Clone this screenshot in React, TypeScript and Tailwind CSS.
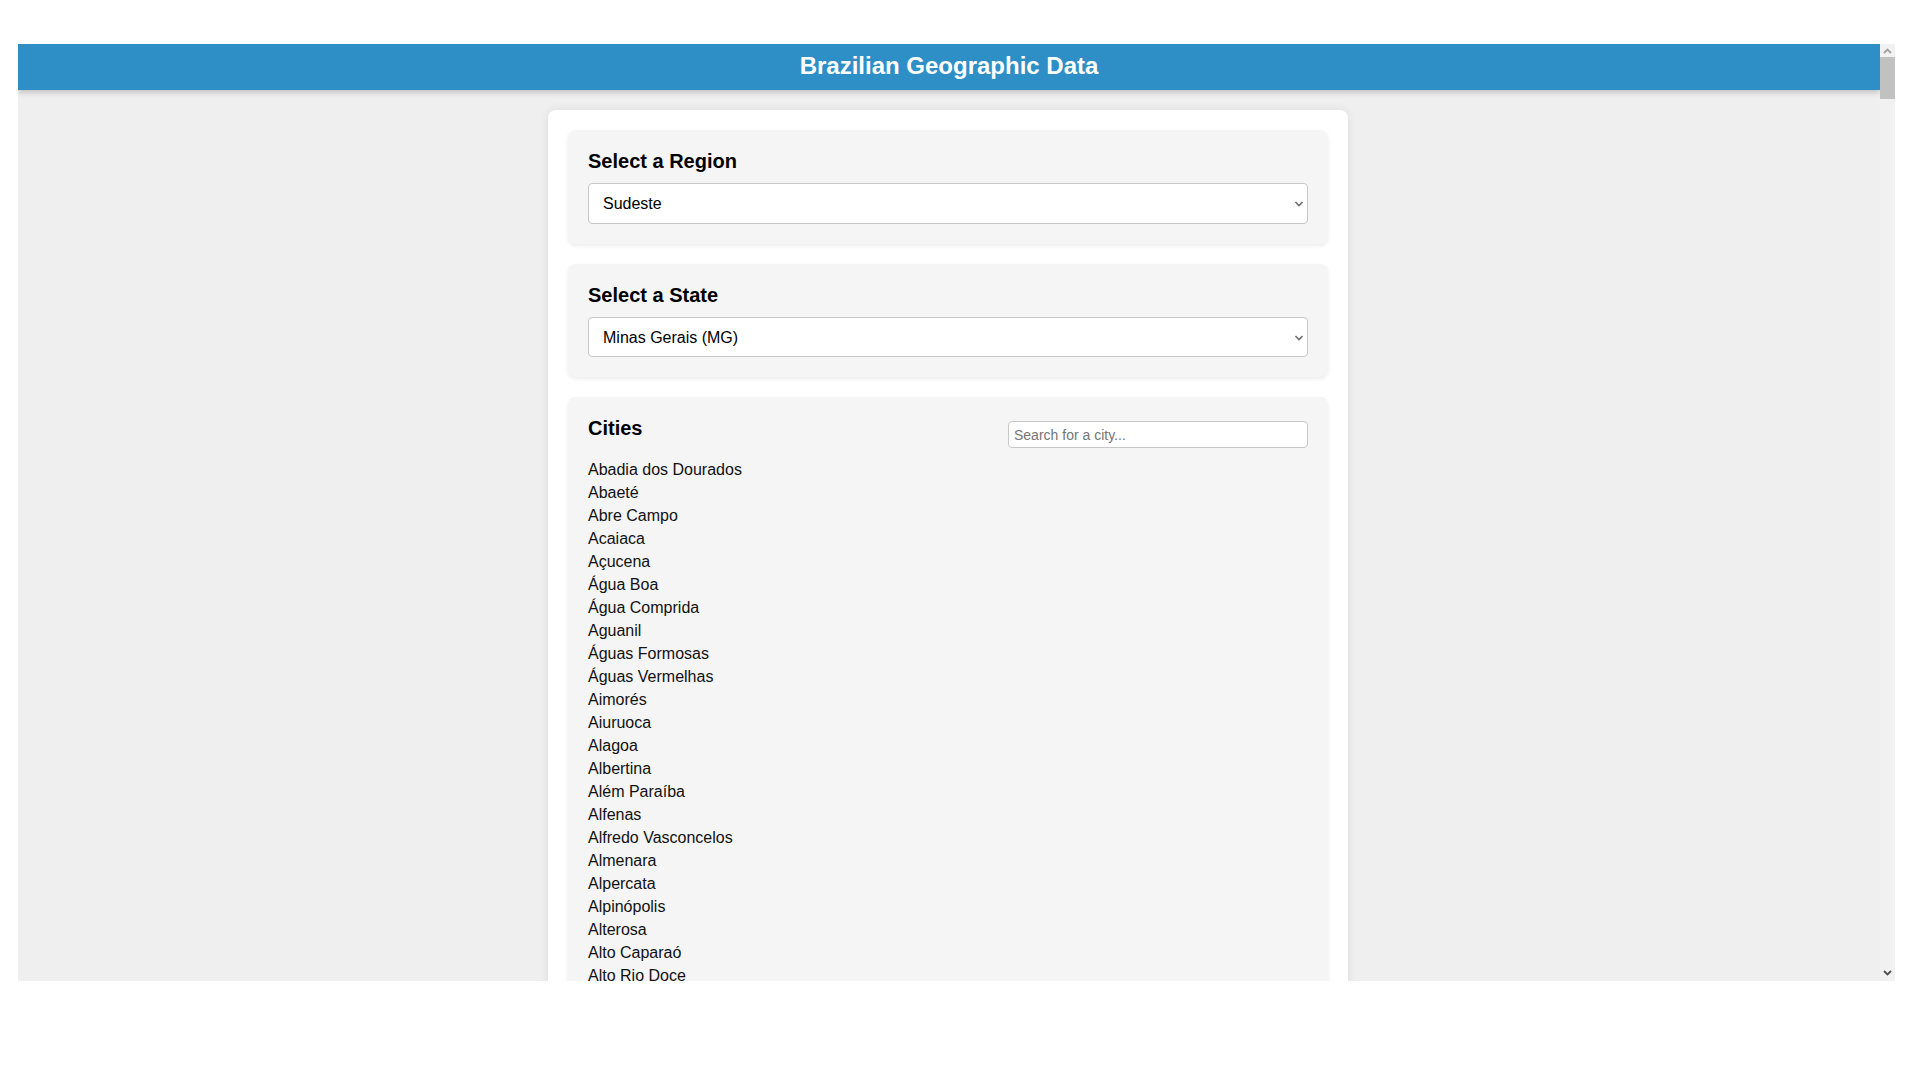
import React from "react";

const cities = [
  "Abadia dos Dourados",
  "Abaeté",
  "Abre Campo",
  "Acaiaca",
  "Açucena",
  "Água Boa",
  "Água Comprida",
  "Aguanil",
  "Águas Formosas",
  "Águas Vermelhas",
  "Aimorés",
  "Aiuruoca",
  "Alagoa",
  "Albertina",
  "Além Paraíba",
  "Alfenas",
  "Alfredo Vasconcelos",
  "Almenara",
  "Alpercata",
  "Alpinópolis",
  "Alterosa",
  "Alto Caparaó",
  "Alto Rio Doce",
  "Alto Jequitibá",
  "Alvarenga",
  "Alvinópolis",
  "Alvorada de Minas",
];

function Chevron({ up, color }: { up?: boolean; color: string }) {
  return (
    <svg width="9" height="6" viewBox="0 0 9 6" className="block">
      {up ? (
        <path d="M1 5 L4.5 1.5 L8 5" fill="none" stroke={color} strokeWidth="1.8" />
      ) : (
        <path d="M1 1 L4.5 4.5 L8 1" fill="none" stroke={color} strokeWidth="1.8" />
      )}
    </svg>
  );
}

function Select({ value, options }: { value: string; options: string[] }) {
  return (
    <div className="relative">
      <select
        defaultValue={value}
        className="block w-full h-[40.5px] pl-[14px] pr-[30px] pt-[1px] border border-[#c8c8c8] rounded-[4px] bg-white text-[16px] text-black appearance-none outline-none"
      >
        {options.map((o) => (
          <option key={o}>{o}</option>
        ))}
      </select>
      <svg
        width="10"
        height="6"
        viewBox="0 0 10 6"
        className="absolute right-[4px] top-[18px] pointer-events-none"
      >
        <path d="M1.5 1 L5 4.5 L8.5 1" fill="none" stroke="#6e6e6e" strokeWidth="1.6" />
      </svg>
    </div>
  );
}

export default function App() {
  return (
    <div className="w-[1920px] h-[1080px] bg-white pt-[44px] pl-[18px] font-['Liberation_Sans',Arial,sans-serif] leading-[normal] text-black">
      <div className="flex w-[1877px] h-[937px] overflow-hidden">
        <div className="flex-1 bg-[#efefef] overflow-hidden">
          <header className="h-[46px] bg-[#2e8fc7] text-white text-center shadow-[0_2px_6px_rgba(0,0,0,0.22)] relative z-10">
            <h1 className="text-[24px] font-bold pt-[8px]">Brazilian Geographic Data</h1>
          </header>
          <main className="relative -left-[1px] w-[800px] mx-auto mt-[20px] bg-white rounded-[8px] p-[20px] shadow-[0_0_10px_rgba(0,0,0,0.08)] flex flex-col gap-[20px]">
            <section className="bg-[#f5f5f5] rounded-[8px] p-[20px] shadow-[0_2px_4px_rgba(0,0,0,0.08)]">
              <h2 className="text-[20px] font-bold mb-[10px]">Select a Region</h2>
              <Select value="Sudeste" options={["Norte", "Nordeste", "Sudeste", "Sul", "Centro-Oeste"]} />
            </section>
            <section className="bg-[#f5f5f5] rounded-[8px] p-[20px] shadow-[0_2px_4px_rgba(0,0,0,0.08)]">
              <h2 className="text-[20px] font-bold mb-[10px]">Select a State</h2>
              <Select
                value="Minas Gerais (MG)"
                options={["Espírito Santo (ES)", "Minas Gerais (MG)", "Rio de Janeiro (RJ)", "São Paulo (SP)"]}
              />
            </section>
            <section className="bg-[#f5f5f5] rounded-[8px] p-[20px] shadow-[0_2px_4px_rgba(0,0,0,0.08)]">
              <div className="flex justify-between items-start mb-[10px]">
                <h2 className="text-[20px] font-bold">Cities</h2>
                <input
                  type="text"
                  placeholder="Search for a city..."
                  className="mt-[4px] w-[300px] h-[27px] px-[5px] border border-[#c8c8c8] rounded-[4px] bg-white text-[14px] placeholder:text-[#757575] outline-none"
                />
              </div>
              <ul>
                {cities.map((c) => (
                  <li key={c} className="text-[16px] leading-[23px] text-[#111]">
                    {c}
                  </li>
                ))}
              </ul>
            </section>
          </main>
        </div>
        <div className="w-[15px] bg-[#f1f1f1] flex flex-col">
          <div className="h-[13px] flex items-center justify-center">
            <Chevron up color="#a3a3a3" />
          </div>
          <div className="h-[42px] bg-[#c1c1c1]" />
          <div className="flex-1" />
          <div className="h-[16px] flex items-center justify-center">
            <Chevron color="#505050" />
          </div>
        </div>
      </div>
    </div>
  );
}
